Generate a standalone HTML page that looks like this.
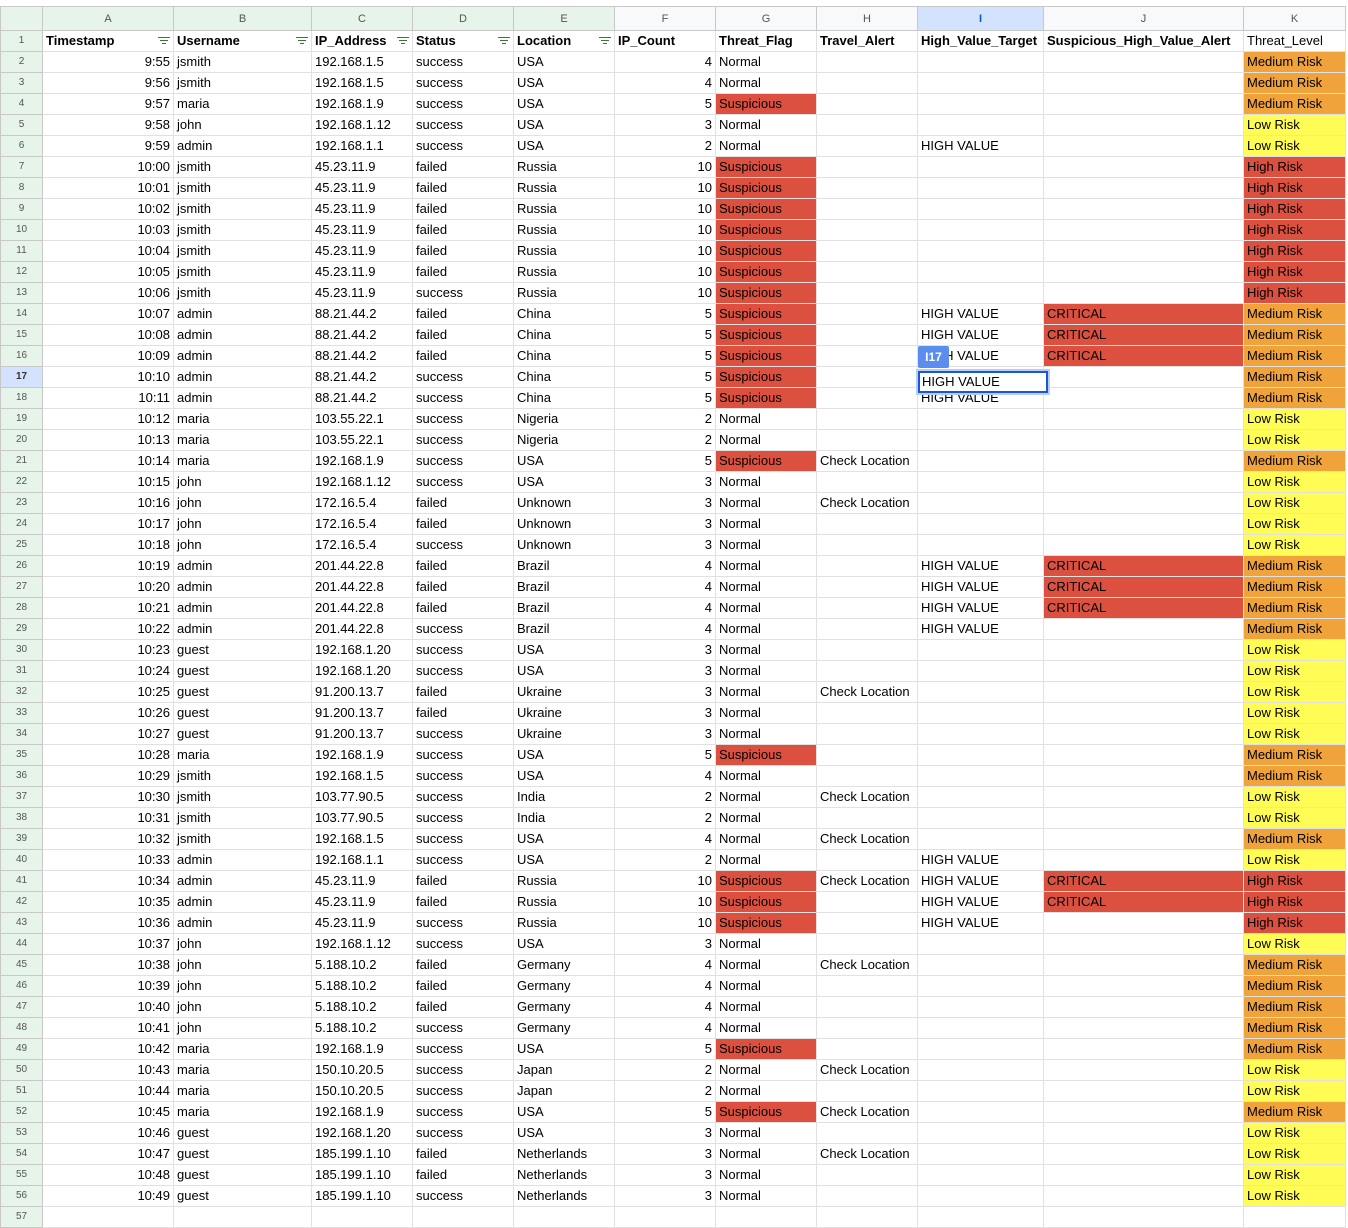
<!DOCTYPE html><html><head><style>
body{margin:0;background:#fff;width:1348px;height:1212px;overflow:hidden;position:relative;font-family:"Liberation Sans",Arial,sans-serif;}
table{position:absolute;left:0;top:6px;border-collapse:collapse;table-layout:fixed;width:1345px;font-size:13px;}
td{height:20px;border:1px solid #e1e1e1;padding:0 3px;white-space:nowrap;overflow:hidden;line-height:20px;color:#000;}
tr.h td{height:23px;background:#f8f9fa;color:#555;font-size:11px;text-align:center;border-color:#c8c8c8;}
tr.h td.g{background:#e6f4ea;}
tr.h td.s{background:#d3e3fd;color:#0b57d0;font-weight:bold;}
td.n{background:#e6f4ea;color:#555;font-size:10px;text-align:center;padding:0;border-color:#c8c8c8;}
td.r{text-align:right;}
tr.b td{font-weight:bold;border-bottom:1px dashed #999;}
tr.b td.n{font-weight:normal;}
.R{background:#dc5040;}.O{background:#f1a33b;}.Y{background:#fffd55;}
td.f{border-left:1px solid #2e8b3e;}
.fi{float:right;width:12px;height:8px;margin-top:6px;background:linear-gradient(#2e7d32,#2e7d32) 0 0/12px 1px no-repeat,linear-gradient(#2e7d32,#2e7d32) 2px 3px/8px 1px no-repeat,linear-gradient(#2e7d32,#2e7d32) 4px 6px/4px 1px no-repeat;}
#sel{position:absolute;left:918px;top:371px;width:124px;height:18px;border:2px solid #1a56d6;background:#fff;font-size:13px;line-height:18px;padding-left:2px;box-shadow:0 0 0 2px #b8cdf7;}
#lab{position:absolute;left:918px;top:346px;width:31px;height:22px;background:#5b8def;color:#fff;font-size:12px;font-weight:bold;text-align:center;line-height:22px;border-radius:2px;}
</style></head><body>
<table>
<colgroup><col style="width:42px"><col style="width:131px"><col style="width:138px"><col style="width:101px"><col style="width:101px"><col style="width:101px"><col style="width:101px"><col style="width:101px"><col style="width:101px"><col style="width:126px"><col style="width:200px"><col style="width:102px"></colgroup>
<tr class="h"><td class="g"></td><td class="g">A</td><td class="g">B</td><td class="g">C</td><td class="g">D</td><td class="g">E</td><td>F</td><td>G</td><td>H</td><td class="s">I</td><td>J</td><td>K</td></tr>
<tr class="b"><td class="n">1</td><td>Timestamp<span class="fi"></span></td><td>Username<span class="fi"></span></td><td>IP_Address<span class="fi"></span></td><td>Status<span class="fi"></span></td><td>Location<span class="fi"></span></td><td class="f">IP_Count</td><td>Threat_Flag</td><td>Travel_Alert</td><td>High_Value_Target</td><td>Suspicious_High_Value_Alert</td><td style="font-weight:normal">Threat_Level</td></tr>
<tr><td class="n">2</td><td class="r">9:55</td><td>jsmith</td><td>192.168.1.5</td><td>success</td><td>USA</td><td class="r f">4</td><td>Normal</td><td></td><td></td><td></td><td class="O">Medium Risk</td></tr>
<tr><td class="n">3</td><td class="r">9:56</td><td>jsmith</td><td>192.168.1.5</td><td>success</td><td>USA</td><td class="r f">4</td><td>Normal</td><td></td><td></td><td></td><td class="O">Medium Risk</td></tr>
<tr><td class="n">4</td><td class="r">9:57</td><td>maria</td><td>192.168.1.9</td><td>success</td><td>USA</td><td class="r f">5</td><td class="R">Suspicious</td><td></td><td></td><td></td><td class="O">Medium Risk</td></tr>
<tr><td class="n">5</td><td class="r">9:58</td><td>john</td><td>192.168.1.12</td><td>success</td><td>USA</td><td class="r f">3</td><td>Normal</td><td></td><td></td><td></td><td class="Y">Low Risk</td></tr>
<tr><td class="n">6</td><td class="r">9:59</td><td>admin</td><td>192.168.1.1</td><td>success</td><td>USA</td><td class="r f">2</td><td>Normal</td><td></td><td>HIGH VALUE</td><td></td><td class="Y">Low Risk</td></tr>
<tr><td class="n">7</td><td class="r">10:00</td><td>jsmith</td><td>45.23.11.9</td><td>failed</td><td>Russia</td><td class="r f">10</td><td class="R">Suspicious</td><td></td><td></td><td></td><td class="R">High Risk</td></tr>
<tr><td class="n">8</td><td class="r">10:01</td><td>jsmith</td><td>45.23.11.9</td><td>failed</td><td>Russia</td><td class="r f">10</td><td class="R">Suspicious</td><td></td><td></td><td></td><td class="R">High Risk</td></tr>
<tr><td class="n">9</td><td class="r">10:02</td><td>jsmith</td><td>45.23.11.9</td><td>failed</td><td>Russia</td><td class="r f">10</td><td class="R">Suspicious</td><td></td><td></td><td></td><td class="R">High Risk</td></tr>
<tr><td class="n">10</td><td class="r">10:03</td><td>jsmith</td><td>45.23.11.9</td><td>failed</td><td>Russia</td><td class="r f">10</td><td class="R">Suspicious</td><td></td><td></td><td></td><td class="R">High Risk</td></tr>
<tr><td class="n">11</td><td class="r">10:04</td><td>jsmith</td><td>45.23.11.9</td><td>failed</td><td>Russia</td><td class="r f">10</td><td class="R">Suspicious</td><td></td><td></td><td></td><td class="R">High Risk</td></tr>
<tr><td class="n">12</td><td class="r">10:05</td><td>jsmith</td><td>45.23.11.9</td><td>failed</td><td>Russia</td><td class="r f">10</td><td class="R">Suspicious</td><td></td><td></td><td></td><td class="R">High Risk</td></tr>
<tr><td class="n">13</td><td class="r">10:06</td><td>jsmith</td><td>45.23.11.9</td><td>success</td><td>Russia</td><td class="r f">10</td><td class="R">Suspicious</td><td></td><td></td><td></td><td class="R">High Risk</td></tr>
<tr><td class="n">14</td><td class="r">10:07</td><td>admin</td><td>88.21.44.2</td><td>failed</td><td>China</td><td class="r f">5</td><td class="R">Suspicious</td><td></td><td>HIGH VALUE</td><td class="R">CRITICAL</td><td class="O">Medium Risk</td></tr>
<tr><td class="n">15</td><td class="r">10:08</td><td>admin</td><td>88.21.44.2</td><td>failed</td><td>China</td><td class="r f">5</td><td class="R">Suspicious</td><td></td><td>HIGH VALUE</td><td class="R">CRITICAL</td><td class="O">Medium Risk</td></tr>
<tr><td class="n">16</td><td class="r">10:09</td><td>admin</td><td>88.21.44.2</td><td>failed</td><td>China</td><td class="r f">5</td><td class="R">Suspicious</td><td></td><td>HIGH VALUE</td><td class="R">CRITICAL</td><td class="O">Medium Risk</td></tr>
<tr><td class="n" style="font-weight:bold;color:#333;background:#d3e3fd">17</td><td class="r">10:10</td><td>admin</td><td>88.21.44.2</td><td>success</td><td>China</td><td class="r f">5</td><td class="R">Suspicious</td><td></td><td></td><td></td><td class="O">Medium Risk</td></tr>
<tr><td class="n">18</td><td class="r">10:11</td><td>admin</td><td>88.21.44.2</td><td>success</td><td>China</td><td class="r f">5</td><td class="R">Suspicious</td><td></td><td>HIGH VALUE</td><td></td><td class="O">Medium Risk</td></tr>
<tr><td class="n">19</td><td class="r">10:12</td><td>maria</td><td>103.55.22.1</td><td>success</td><td>Nigeria</td><td class="r f">2</td><td>Normal</td><td></td><td></td><td></td><td class="Y">Low Risk</td></tr>
<tr><td class="n">20</td><td class="r">10:13</td><td>maria</td><td>103.55.22.1</td><td>success</td><td>Nigeria</td><td class="r f">2</td><td>Normal</td><td></td><td></td><td></td><td class="Y">Low Risk</td></tr>
<tr><td class="n">21</td><td class="r">10:14</td><td>maria</td><td>192.168.1.9</td><td>success</td><td>USA</td><td class="r f">5</td><td class="R">Suspicious</td><td>Check Location</td><td></td><td></td><td class="O">Medium Risk</td></tr>
<tr><td class="n">22</td><td class="r">10:15</td><td>john</td><td>192.168.1.12</td><td>success</td><td>USA</td><td class="r f">3</td><td>Normal</td><td></td><td></td><td></td><td class="Y">Low Risk</td></tr>
<tr><td class="n">23</td><td class="r">10:16</td><td>john</td><td>172.16.5.4</td><td>failed</td><td>Unknown</td><td class="r f">3</td><td>Normal</td><td>Check Location</td><td></td><td></td><td class="Y">Low Risk</td></tr>
<tr><td class="n">24</td><td class="r">10:17</td><td>john</td><td>172.16.5.4</td><td>failed</td><td>Unknown</td><td class="r f">3</td><td>Normal</td><td></td><td></td><td></td><td class="Y">Low Risk</td></tr>
<tr><td class="n">25</td><td class="r">10:18</td><td>john</td><td>172.16.5.4</td><td>success</td><td>Unknown</td><td class="r f">3</td><td>Normal</td><td></td><td></td><td></td><td class="Y">Low Risk</td></tr>
<tr><td class="n">26</td><td class="r">10:19</td><td>admin</td><td>201.44.22.8</td><td>failed</td><td>Brazil</td><td class="r f">4</td><td>Normal</td><td></td><td>HIGH VALUE</td><td class="R">CRITICAL</td><td class="O">Medium Risk</td></tr>
<tr><td class="n">27</td><td class="r">10:20</td><td>admin</td><td>201.44.22.8</td><td>failed</td><td>Brazil</td><td class="r f">4</td><td>Normal</td><td></td><td>HIGH VALUE</td><td class="R">CRITICAL</td><td class="O">Medium Risk</td></tr>
<tr><td class="n">28</td><td class="r">10:21</td><td>admin</td><td>201.44.22.8</td><td>failed</td><td>Brazil</td><td class="r f">4</td><td>Normal</td><td></td><td>HIGH VALUE</td><td class="R">CRITICAL</td><td class="O">Medium Risk</td></tr>
<tr><td class="n">29</td><td class="r">10:22</td><td>admin</td><td>201.44.22.8</td><td>success</td><td>Brazil</td><td class="r f">4</td><td>Normal</td><td></td><td>HIGH VALUE</td><td></td><td class="O">Medium Risk</td></tr>
<tr><td class="n">30</td><td class="r">10:23</td><td>guest</td><td>192.168.1.20</td><td>success</td><td>USA</td><td class="r f">3</td><td>Normal</td><td></td><td></td><td></td><td class="Y">Low Risk</td></tr>
<tr><td class="n">31</td><td class="r">10:24</td><td>guest</td><td>192.168.1.20</td><td>success</td><td>USA</td><td class="r f">3</td><td>Normal</td><td></td><td></td><td></td><td class="Y">Low Risk</td></tr>
<tr><td class="n">32</td><td class="r">10:25</td><td>guest</td><td>91.200.13.7</td><td>failed</td><td>Ukraine</td><td class="r f">3</td><td>Normal</td><td>Check Location</td><td></td><td></td><td class="Y">Low Risk</td></tr>
<tr><td class="n">33</td><td class="r">10:26</td><td>guest</td><td>91.200.13.7</td><td>failed</td><td>Ukraine</td><td class="r f">3</td><td>Normal</td><td></td><td></td><td></td><td class="Y">Low Risk</td></tr>
<tr><td class="n">34</td><td class="r">10:27</td><td>guest</td><td>91.200.13.7</td><td>success</td><td>Ukraine</td><td class="r f">3</td><td>Normal</td><td></td><td></td><td></td><td class="Y">Low Risk</td></tr>
<tr><td class="n">35</td><td class="r">10:28</td><td>maria</td><td>192.168.1.9</td><td>success</td><td>USA</td><td class="r f">5</td><td class="R">Suspicious</td><td></td><td></td><td></td><td class="O">Medium Risk</td></tr>
<tr><td class="n">36</td><td class="r">10:29</td><td>jsmith</td><td>192.168.1.5</td><td>success</td><td>USA</td><td class="r f">4</td><td>Normal</td><td></td><td></td><td></td><td class="O">Medium Risk</td></tr>
<tr><td class="n">37</td><td class="r">10:30</td><td>jsmith</td><td>103.77.90.5</td><td>success</td><td>India</td><td class="r f">2</td><td>Normal</td><td>Check Location</td><td></td><td></td><td class="Y">Low Risk</td></tr>
<tr><td class="n">38</td><td class="r">10:31</td><td>jsmith</td><td>103.77.90.5</td><td>success</td><td>India</td><td class="r f">2</td><td>Normal</td><td></td><td></td><td></td><td class="Y">Low Risk</td></tr>
<tr><td class="n">39</td><td class="r">10:32</td><td>jsmith</td><td>192.168.1.5</td><td>success</td><td>USA</td><td class="r f">4</td><td>Normal</td><td>Check Location</td><td></td><td></td><td class="O">Medium Risk</td></tr>
<tr><td class="n">40</td><td class="r">10:33</td><td>admin</td><td>192.168.1.1</td><td>success</td><td>USA</td><td class="r f">2</td><td>Normal</td><td></td><td>HIGH VALUE</td><td></td><td class="Y">Low Risk</td></tr>
<tr><td class="n">41</td><td class="r">10:34</td><td>admin</td><td>45.23.11.9</td><td>failed</td><td>Russia</td><td class="r f">10</td><td class="R">Suspicious</td><td>Check Location</td><td>HIGH VALUE</td><td class="R">CRITICAL</td><td class="R">High Risk</td></tr>
<tr><td class="n">42</td><td class="r">10:35</td><td>admin</td><td>45.23.11.9</td><td>failed</td><td>Russia</td><td class="r f">10</td><td class="R">Suspicious</td><td></td><td>HIGH VALUE</td><td class="R">CRITICAL</td><td class="R">High Risk</td></tr>
<tr><td class="n">43</td><td class="r">10:36</td><td>admin</td><td>45.23.11.9</td><td>success</td><td>Russia</td><td class="r f">10</td><td class="R">Suspicious</td><td></td><td>HIGH VALUE</td><td></td><td class="R">High Risk</td></tr>
<tr><td class="n">44</td><td class="r">10:37</td><td>john</td><td>192.168.1.12</td><td>success</td><td>USA</td><td class="r f">3</td><td>Normal</td><td></td><td></td><td></td><td class="Y">Low Risk</td></tr>
<tr><td class="n">45</td><td class="r">10:38</td><td>john</td><td>5.188.10.2</td><td>failed</td><td>Germany</td><td class="r f">4</td><td>Normal</td><td>Check Location</td><td></td><td></td><td class="O">Medium Risk</td></tr>
<tr><td class="n">46</td><td class="r">10:39</td><td>john</td><td>5.188.10.2</td><td>failed</td><td>Germany</td><td class="r f">4</td><td>Normal</td><td></td><td></td><td></td><td class="O">Medium Risk</td></tr>
<tr><td class="n">47</td><td class="r">10:40</td><td>john</td><td>5.188.10.2</td><td>failed</td><td>Germany</td><td class="r f">4</td><td>Normal</td><td></td><td></td><td></td><td class="O">Medium Risk</td></tr>
<tr><td class="n">48</td><td class="r">10:41</td><td>john</td><td>5.188.10.2</td><td>success</td><td>Germany</td><td class="r f">4</td><td>Normal</td><td></td><td></td><td></td><td class="O">Medium Risk</td></tr>
<tr><td class="n">49</td><td class="r">10:42</td><td>maria</td><td>192.168.1.9</td><td>success</td><td>USA</td><td class="r f">5</td><td class="R">Suspicious</td><td></td><td></td><td></td><td class="O">Medium Risk</td></tr>
<tr><td class="n">50</td><td class="r">10:43</td><td>maria</td><td>150.10.20.5</td><td>success</td><td>Japan</td><td class="r f">2</td><td>Normal</td><td>Check Location</td><td></td><td></td><td class="Y">Low Risk</td></tr>
<tr><td class="n">51</td><td class="r">10:44</td><td>maria</td><td>150.10.20.5</td><td>success</td><td>Japan</td><td class="r f">2</td><td>Normal</td><td></td><td></td><td></td><td class="Y">Low Risk</td></tr>
<tr><td class="n">52</td><td class="r">10:45</td><td>maria</td><td>192.168.1.9</td><td>success</td><td>USA</td><td class="r f">5</td><td class="R">Suspicious</td><td>Check Location</td><td></td><td></td><td class="O">Medium Risk</td></tr>
<tr><td class="n">53</td><td class="r">10:46</td><td>guest</td><td>192.168.1.20</td><td>success</td><td>USA</td><td class="r f">3</td><td>Normal</td><td></td><td></td><td></td><td class="Y">Low Risk</td></tr>
<tr><td class="n">54</td><td class="r">10:47</td><td>guest</td><td>185.199.1.10</td><td>failed</td><td>Netherlands</td><td class="r f">3</td><td>Normal</td><td>Check Location</td><td></td><td></td><td class="Y">Low Risk</td></tr>
<tr><td class="n">55</td><td class="r">10:48</td><td>guest</td><td>185.199.1.10</td><td>failed</td><td>Netherlands</td><td class="r f">3</td><td>Normal</td><td></td><td></td><td></td><td class="Y">Low Risk</td></tr>
<tr style="border-bottom:1px dashed #999"><td class="n">56</td><td class="r">10:49</td><td>guest</td><td>185.199.1.10</td><td>success</td><td>Netherlands</td><td class="r f">3</td><td>Normal</td><td></td><td></td><td></td><td class="Y">Low Risk</td></tr>
<tr><td class="n">57</td><td></td><td></td><td></td><td></td><td></td><td class="f"></td><td></td><td></td><td></td><td></td><td></td></tr>
</table>
<div id="sel">HIGH VALUE</div>
<div id="lab">I17</div>
</body></html>
